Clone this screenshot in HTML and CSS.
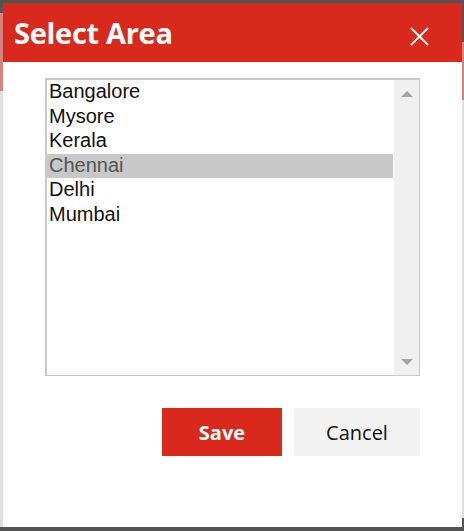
FILE: index.html
```html
<!DOCTYPE html>
<html lang="en">
<head>
<meta charset="UTF-8">
<meta name="viewport" content="width=device-width, initial-scale=1.0">
<title>Select Area</title>
<link rel="stylesheet" href="styles.css">
</head>
<body>

<div class="page">
<div class="strip strip-left"></div>

<div class="dialog">
<div class="dialog-head">
<h1 class="dialog-title">Select Area</h1>
<button class="close" type="button" aria-label="Close">
<svg width="19" height="19" viewBox="0 0 19 19"><path d="M1 1 L18 18 M18 1 L1 18" stroke="#fff" stroke-width="2" fill="none"/></svg>
</button>
</div>

<div class="dialog-body">
<div class="listbox">
<div class="options">
<div class="option">Bangalore</div>
<div class="option">Mysore</div>
<div class="option">Kerala</div>
<div class="option selected">Chennai</div>
<div class="option">Delhi</div>
<div class="option">Mumbai</div>
</div>
<div class="scrollbar">
<span class="arrow arrow-up"></span>
<span class="arrow arrow-down"></span>
</div>
</div>

<div class="actions">
<button class="btn btn-save" type="button">Save</button>
<button class="btn btn-cancel" type="button">Cancel</button>
</div>
</div>
</div>

<div class="strip strip-right"></div>
</div>

</body>
</html>
```

FILE: styles.css
```css
html, body {
  margin: 0;
  overflow: hidden;
}
body {
  background: #545454;
  font-family: 'Open Sans', 'Noto Sans', sans-serif;
}
div.page {
  display: flex;
  height: 531px;
  padding-top: 3px;
  box-sizing: border-box;
}
div.strip {  /* 後ろのページがダイアログの左右から少し見えている部分 */
  width: 3px;
  height: 524px;
}
div.strip-left {
  background: linear-gradient(#545454 0 10px, #d58380 10px 88px, #dedede 88px);
}
div.strip-right {
  width: 2px;
  background: linear-gradient(#545454 0 39px, #d58380 39px 97px, #dedede 97px 515px, #545454 515px);
}
div.dialog {
  width: 459px;
  height: 524px;
  background: #fff;
  display: flex;
  flex-direction: column;
}
div.dialog-head {
  height: 59px;
  background: #d9291d;
  display: flex;
  align-items: center;
  justify-content: space-between;
  padding: 0 33px 0 11px;
}
h1.dialog-title {
  margin: 0;
  color: #fff;
  font-size: 29px;
  font-weight: 700;
  letter-spacing: -0.3px;
}
button.close {
  border: none;
  background: none;
  padding: 0;
  margin-top: 8px;
  width: 19px;
  height: 19px;
  display: flex;
}
div.dialog-body {
  padding: 16px 42px 0 42px;
}
div.listbox {  /* 選択リスト */
  display: flex;
  height: 295px;
  border: 2px solid #c8c8c8;
  border-right-width: 1px;
  border-bottom-width: 1px;
}
div.options {
  flex: 1;
  font-family: 'Liberation Sans', Arial, sans-serif;
  font-size: 20px;
  color: #111;
}
div.option {
  height: 24.5px;
  line-height: 23px;
  padding-left: 2px;
  margin-right: 1px;
}
div.option.selected {
  background: #c8c8c8;
  color: #555;
}
div.scrollbar {
  width: 25px;
  background: #f0f0f0;
  display: flex;
  flex-direction: column;
  justify-content: space-between;
  align-items: center;
  padding: 11px 0 10px;
}
span.arrow {
  width: 0;
  height: 0;
  border-left: 6px solid transparent;
  border-right: 6px solid transparent;
}
span.arrow-up {
  border-bottom: 6px solid #a3a3a3;
}
span.arrow-down {
  border-top: 6px solid #a3a3a3;
}
div.actions {
  display: flex;
  justify-content: flex-end;
  gap: 12px;
  margin-top: 32px;
}
button.btn {
  height: 48px;
  border: none;
  font-family: 'Open Sans', 'Noto Sans', sans-serif;
  font-size: 20px;
  padding: 0;
}
button.btn-save {
  width: 120px;
  background: #d9291d;
  color: #fff;
  font-weight: 700;
}
button.btn-cancel {
  width: 126px;
  background: #f2f2f2;
  color: #111;
}
```
